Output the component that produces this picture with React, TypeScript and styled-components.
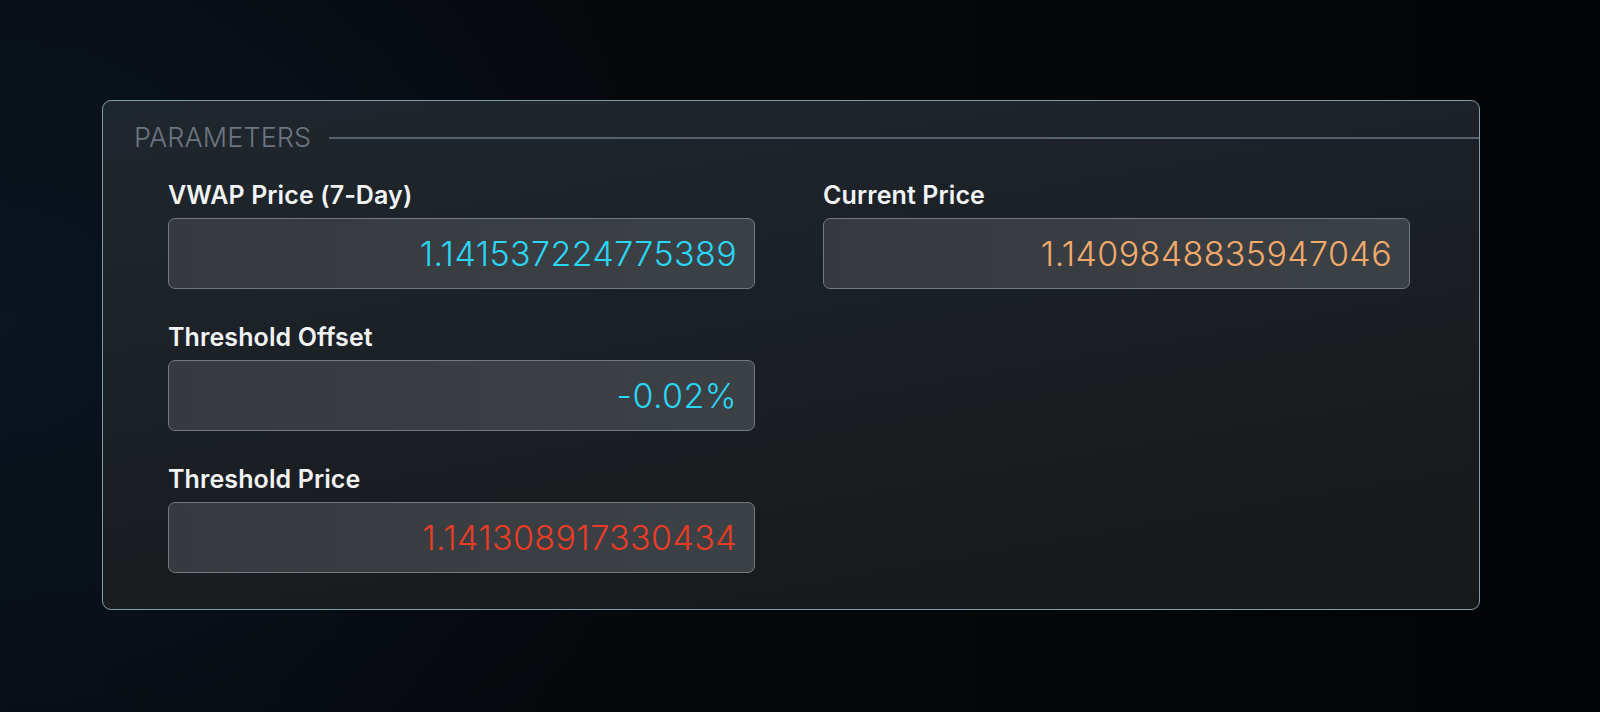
import React from 'react'
import styled, { createGlobalStyle } from 'styled-components'

const GlobalStyle = createGlobalStyle`
    html, body {
        margin: 0;
        padding: 0;
        height: 100%;
    }
    body {
        font-family: Inter, 'Noto Sans', sans-serif;
        background: #050607;
    }
`

const Page = styled.div`
    width: 1600px;
    height: 712px;
    box-sizing: border-box;
    padding: 100px 120px 0 102px;
    background:
        radial-gradient(ellipse 700px 600px at 0% 45%, #0a1520 0%, rgba(8, 14, 22, 0) 100%),
        linear-gradient(90deg, #070b10 0%, #030405 100%);
`

const Panel = styled.section`
    width: 1378px;
    box-sizing: border-box;
    border: 1.5px solid #7e9ca6;
    border-radius: 9px;
    background: linear-gradient(170deg, #1f272e 0%, #1b2025 45%, #161819 100%);
    padding: 21px 0 36px 0;
`

const Header = styled.div`
    display: flex;
    align-items: center;
    gap: 18px;
    padding-left: 31px;
`

const HeaderTitle = styled.h2`
    margin: 0;
    font-size: 27px;
    font-weight: 300;
    line-height: 1.2;
    letter-spacing: 0.1px;
    color: #6c7680;
`

const HeaderRule = styled.div`
    flex: 1;
    height: 1.5px;
    background: #56626b;
`

const Grid = styled.div`
    display: grid;
    grid-template-columns: 587px 587px;
    column-gap: 68px;
    row-gap: 34px;
    padding: 27px 66px 0 65px;
`

const Field = styled.div`
    display: flex;
    flex-direction: column;
    gap: 8px;
`

const Label = styled.label`
    font-size: 25px;
    font-weight: 600;
    line-height: 29px;
    letter-spacing: 0.1px;
    color: #f1f3f5;
`

const ValueBox = styled.div<{ $color: string }>`
    height: 71px;
    box-sizing: border-box;
    display: flex;
    align-items: center;
    justify-content: flex-end;
    padding: 0 17px;
    border: 1.5px solid #74797e;
    border-radius: 7px;
    background: linear-gradient(90deg, #363a3e 0%, #3c4145 100%);
    font-size: 34px;
    font-weight: 300;
    letter-spacing: 0.4px;
    color: ${({ $color }) => $color};
`

const fields = [
    { label: 'VWAP Price (7-Day)', value: '1.141537224775389', color: '#2ad6f5' },
    { label: 'Current Price', value: '1.1409848835947046', color: '#f2aa6c' },
    { label: 'Threshold Offset', value: '-0.02%', color: '#2ad6f5' },
    null,
    { label: 'Threshold Price', value: '1.141308917330434', color: '#ec3c26' },
]

export default function App() {
    return (
        <>
            <GlobalStyle />
            <Page>
                <Panel>
                    <Header>
                        <HeaderTitle>PARAMETERS</HeaderTitle>
                        <HeaderRule />
                    </Header>
                    <Grid>
                        {fields.map((f, i) =>
                            f ? (
                                <Field key={f.label}>
                                    <Label>{f.label}</Label>
                                    <ValueBox $color={f.color}>{f.value}</ValueBox>
                                </Field>
                            ) : (
                                <div key={i} />
                            )
                        )}
                    </Grid>
                </Panel>
            </Page>
        </>
    )
}
